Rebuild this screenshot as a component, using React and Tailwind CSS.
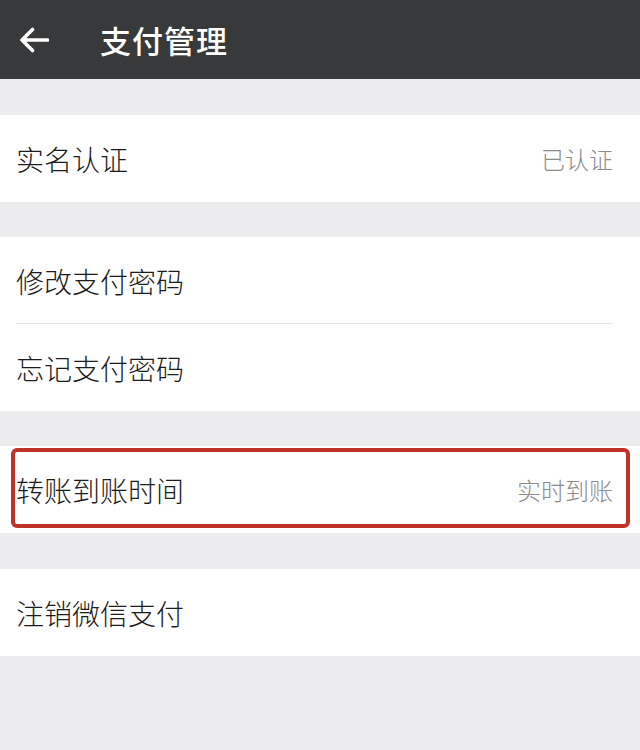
import React from 'react'

const font = { fontFamily: '"Noto Sans CJK SC", "Noto Sans", sans-serif' }

function Row({ label, value, divider, highlight }) {
  return (
    <div className="relative h-[87px] bg-white flex items-center justify-between pl-4 pr-[27px]">
      <span className="text-[28px] leading-none font-light text-[#1c1c1c]">{label}</span>
      {value && <span className="text-[24px] leading-none font-light text-[#8c8c8c]">{value}</span>}
      {divider && <div className="absolute left-4 right-7 bottom-0 h-px bg-[#e6e6e6]" />}
      {highlight && (
        <div className="absolute left-[11px] right-[10px] top-[2px] bottom-[5px] border-4 border-[#c0332b] rounded-[6px] pointer-events-none" />
      )}
    </div>
  )
}

export default function App() {
  return (
    <div className="w-[640px] h-[750px] bg-[#ececee] overflow-hidden" style={font}>
      {/* header */}
      <div className="h-[79px] bg-[#38393b] flex items-center">
        <svg className="ml-[19px]" width="30" height="26" viewBox="0 0 30 26" fill="none">
          <path d="M28.5 13H3 M13.5 2.5L3 13l10.5 10.5" stroke="#fff" strokeWidth="3.6" strokeLinecap="round" strokeLinejoin="round" />
        </svg>
        <h1 className="ml-[51px] text-[31px] font-medium text-white tracking-[1px] leading-none">支付管理</h1>
      </div>

      <div className="h-[36px]" />
      <Row label="实名认证" value="已认证" />

      <div className="h-[35px]" />
      <Row label="修改支付密码" divider />
      <Row label="忘记支付密码" />

      <div className="h-[35px]" />
      <Row label="转账到账时间" value="实时到账" highlight />

      <div className="h-[36px]" />
      <Row label="注销微信支付" />
    </div>
  )
}
